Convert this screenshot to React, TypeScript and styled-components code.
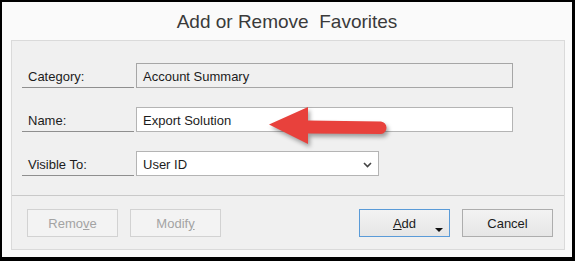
import React from "react"
import styled, { createGlobalStyle } from "styled-components"

const GlobalStyle = createGlobalStyle`
  html, body {
    margin: 0;
    padding: 0;
    background: #ffffff;
  }
  * {
    box-sizing: border-box;
  }
`

const Dialog = styled.div`
  position: relative;
  width: 575px;
  height: 261px;
  display: flex;
  flex-direction: column;
  background: #fafafa;
  border-style: solid;
  border-color: #000;
  border-width: 2px 3px 4px 2px;
  font-family: "Liberation Sans", Arial, sans-serif;
  font-size: 13px;
  color: #1c1c1c;
`

const Title = styled.div`
  height: 38px;
  display: flex;
  align-items: center;
  justify-content: center;
  font-size: 19px;
  color: #3a3a3a;
  white-space: pre;
  padding-top: 1px;
`

const Panel = styled.div`
  margin: 0 7px 0 9px;
  height: 210px;
  display: flex;
  flex-direction: column;
  background: #f0f0f0;
  border: 1px solid #dadada;
`

const Form = styled.div`
  display: flex;
  flex-direction: column;
  gap: 19px;
  padding: 22px 10px 0 10px;
`

const Row = styled.div`
  display: flex;
  align-items: stretch;
  height: 25px;
`

const Label = styled.div`
  width: 112px;
  margin-right: 2px;
  display: flex;
  align-items: center;
  padding: 2px 0 0 6px;
  border-bottom: 1px solid #8f8f8f;
`

const Field = styled.div<{ $width: number; $readOnly?: boolean }>`
  width: ${(p) => p.$width}px;
  display: flex;
  align-items: center;
  justify-content: space-between;
  padding: 1px 6px 0 6px;
  background: ${(p) => (p.$readOnly ? "#f0f0f0" : "#ffffff")};
  border: 1px solid ${(p) => (p.$readOnly ? "#a6a6a6" : "#b4b4b4")};
`

const Chevron = styled.svg`
  width: 9px;
  height: 6px;
  margin-top: 1px;
`

const Separator = styled.div`
  margin-top: 19px;
  height: 1px;
  background: #c9c9c9;
`

const ButtonBar = styled.div`
  display: flex;
  align-items: center;
  padding: 13px 11px 0 15px;
`

const Spacer = styled.div`
  flex: 1;
`

const Button = styled.div<{ $variant: "disabled" | "default" | "normal" }>`
  position: relative;
  width: 91px;
  height: 28px;
  display: flex;
  align-items: center;
  justify-content: center;
  padding-top: 1px;
  color: ${(p) => (p.$variant === "disabled" ? "#a3a3a3" : "#1c1c1c")};
  border: 1px solid
    ${(p) =>
      p.$variant === "disabled"
        ? "#d2d2d2"
        : p.$variant === "default"
          ? "#5a9bd8"
          : "#adadad"};
  background: ${(p) =>
    p.$variant === "disabled"
      ? "#f3f3f3"
      : "linear-gradient(#f3f3f3, #e6e6e6)"};
  & + & {
    margin-left: 12px;
  }
`

const DropArrow = styled.span`
  position: absolute;
  right: 6px;
  top: 18px;
  width: 0;
  height: 0;
  border-left: 4px solid transparent;
  border-right: 4px solid transparent;
  border-top: 4px solid #111;
`

const Pointer = styled.svg`
  position: absolute;
  left: 253px;
  top: 96px;
  width: 150px;
  height: 60px;
  overflow: visible;
  filter: drop-shadow(2px 3px 2px rgba(0, 0, 0, 0.35));
`

export default function App() {
  return (
    <>
      <GlobalStyle />
      <Dialog>
        <Title>Add or Remove  Favorites</Title>
        <Panel>
          <Form>
            <Row>
              <Label>Category:</Label>
              <Field $width={377} $readOnly>
                Account Summary
              </Field>
            </Row>
            <Row>
              <Label>Name:</Label>
              <Field $width={377}>Export Solution</Field>
            </Row>
            <Row>
              <Label>Visible To:</Label>
              <Field $width={243}>
                User ID
                <Chevron viewBox="0 0 9 6">
                  <path d="M1 1 L4.5 4.5 L8 1" fill="none" stroke="#444" strokeWidth="1.6" />
                </Chevron>
              </Field>
            </Row>
          </Form>
          <Separator />
          <ButtonBar>
            <Button $variant="disabled">
              <span>
                Remo<u>v</u>e
              </span>
            </Button>
            <Button $variant="disabled">
              <span>
                Modif<u>y</u>
              </span>
            </Button>
            <Spacer />
            <Button $variant="default">
              <span>
                <u>A</u>dd
              </span>
              <DropArrow />
            </Button>
            <Button $variant="normal">Cancel</Button>
          </ButtonBar>
        </Panel>
        <Pointer viewBox="0 0 150 60">
          <path
            d="M14 26.5 L53 9 L53 22.5 L126 23.5 A6.3 6.3 0 0 1 126 36 L53 35.5 L53 46 Z"
            fill="#e8413c"
          />
        </Pointer>
      </Dialog>
    </>
  )
}
